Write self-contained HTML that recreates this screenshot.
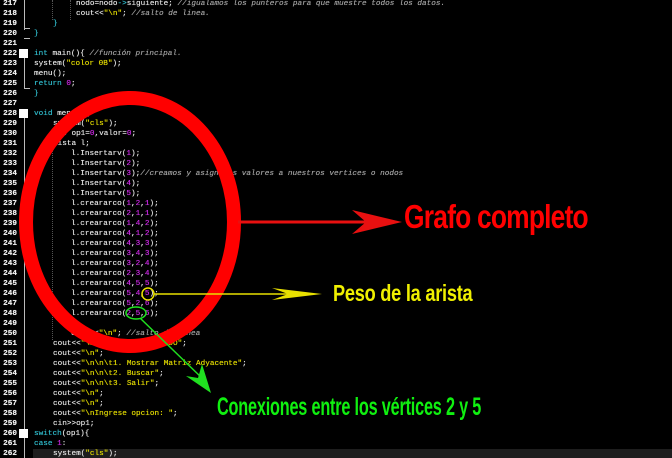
<!DOCTYPE html>
<html><head><meta charset="utf-8"><style>
html,body{margin:0;padding:0;background:#000;width:672px;height:458px;overflow:hidden;position:relative}
.l{position:absolute;left:0;height:10px;line-height:10px;font-family:"Liberation Mono",monospace;font-size:7.7px;color:#e0e0e0;white-space:pre;width:672px;text-shadow:0 0 0.4px currentColor}
.n{position:absolute;left:0;width:17px;text-align:right;color:#f0f0f0;font-weight:bold}
.c{position:absolute;left:34px}
.k{color:#2fb8c8}.s{color:#e0d800}.d{color:#c828e0}.m{color:#a0a0a0;font-style:italic}.b{color:#2fb8c8}
.hl{background:#1e1e1e}
.gut{position:absolute;left:24px;width:1px;background:#bbb}
.sq{position:absolute;left:19px;width:9px;height:9px;background:#fff}
.dot{position:absolute;width:0;border-left:1px dotted #555}
.ann{position:absolute;font-family:'Liberation Sans',sans-serif;font-weight:bold;white-space:nowrap;transform-origin:0 0}
</style></head><body>
<div class="gut" style="top:0;height:30px"></div>
<div class="gut" style="top:28px;width:6px;height:1px"></div>
<div class="gut" style="top:38px;width:6px;height:1px"></div>
<div class="gut" style="top:58px;height:30px"></div>
<div class="gut" style="top:88px;width:6px;height:1px"></div>
<div class="gut" style="top:118px;height:340px"></div>
<div class="dot" style="left:52px;top:0;height:20px"></div>
<div class="dot" style="left:70px;top:0;height:20px"></div>
<div class="dot" style="left:52px;top:150px;height:190px"></div>
<div class="sq" style="top:49px"></div>
<div class="sq" style="top:109px"></div>
<div class="sq" style="top:429px"></div>
<div class="l" style="top:-1px"><span class="n">217</span><span class="c" style="left:76px">nodo=nodo<span class="k">-&gt;</span>siguiente; <span class="m">//igualamos los punteros para que muestre todos los datos.</span></span></div>
<div class="l" style="top:9px"><span class="n">218</span><span class="c" style="left:76px">cout&lt;&lt;<span class="s">"\n"</span>; <span class="m">//salto de linea.</span></span></div>
<div class="l" style="top:19px"><span class="n">219</span><span class="c" style="left:53px"><span class="b">}</span></span></div>
<div class="l" style="top:29px"><span class="n">220</span><span class="c"><span class="b">}</span></span></div>
<div class="l" style="top:39px"><span class="n">221</span></div>
<div class="l" style="top:49px"><span class="n">222</span><span class="c"><span class="k">int</span> main(){ <span class="m">//función principal.</span></span></div>
<div class="l" style="top:59px"><span class="n">223</span><span class="c">system(<span class="s">"color 0B"</span>);</span></div>
<div class="l" style="top:69px"><span class="n">224</span><span class="c">menu();</span></div>
<div class="l" style="top:79px"><span class="n">225</span><span class="c"><span class="k">return</span> <span class="d">0</span>;</span></div>
<div class="l" style="top:89px"><span class="n">226</span><span class="c"><span class="b">}</span></span></div>
<div class="l" style="top:99px"><span class="n">227</span></div>
<div class="l" style="top:109px"><span class="n">228</span><span class="c"><span class="k">void</span> menu(){</span></div>
<div class="l" style="top:119px"><span class="n">229</span><span class="c" style="left:53px">system(<span class="s">"cls"</span>);</span></div>
<div class="l" style="top:129px"><span class="n">230</span><span class="c" style="left:53px"><span class="k">int</span> op1=<span class="d">0</span>,valor=<span class="d">0</span>;</span></div>
<div class="l" style="top:139px"><span class="n">231</span><span class="c" style="left:53px">lista l;</span></div>
<div class="l" style="top:149px"><span class="n">232</span><span class="c" style="left:71px">l.Insertarv(<span class="d">1</span>);</span></div>
<div class="l" style="top:159px"><span class="n">233</span><span class="c" style="left:71px">l.Insertarv(<span class="d">2</span>);</span></div>
<div class="l" style="top:169px"><span class="n">234</span><span class="c" style="left:71px">l.Insertarv(<span class="d">3</span>);<span class="m">//creamos y asignamos valores a nuestros vertices o nodos</span></span></div>
<div class="l" style="top:179px"><span class="n">235</span><span class="c" style="left:71px">l.Insertarv(<span class="d">4</span>);</span></div>
<div class="l" style="top:189px"><span class="n">236</span><span class="c" style="left:71px">l.Insertarv(<span class="d">5</span>);</span></div>
<div class="l" style="top:199px"><span class="n">237</span><span class="c" style="left:71px">l.creararco(<span class="d">1</span>,<span class="d">2</span>,<span class="d">1</span>);</span></div>
<div class="l" style="top:209px"><span class="n">238</span><span class="c" style="left:71px">l.creararco(<span class="d">2</span>,<span class="d">1</span>,<span class="d">1</span>);</span></div>
<div class="l" style="top:219px"><span class="n">239</span><span class="c" style="left:71px">l.creararco(<span class="d">1</span>,<span class="d">4</span>,<span class="d">2</span>);</span></div>
<div class="l" style="top:229px"><span class="n">240</span><span class="c" style="left:71px">l.creararco(<span class="d">4</span>,<span class="d">1</span>,<span class="d">2</span>);</span></div>
<div class="l" style="top:239px"><span class="n">241</span><span class="c" style="left:71px">l.creararco(<span class="d">4</span>,<span class="d">3</span>,<span class="d">3</span>);</span></div>
<div class="l" style="top:249px"><span class="n">242</span><span class="c" style="left:71px">l.creararco(<span class="d">3</span>,<span class="d">4</span>,<span class="d">3</span>);</span></div>
<div class="l" style="top:259px"><span class="n">243</span><span class="c" style="left:71px">l.creararco(<span class="d">3</span>,<span class="d">2</span>,<span class="d">4</span>);</span></div>
<div class="l" style="top:269px"><span class="n">244</span><span class="c" style="left:71px">l.creararco(<span class="d">2</span>,<span class="d">3</span>,<span class="d">4</span>);</span></div>
<div class="l" style="top:279px"><span class="n">245</span><span class="c" style="left:71px">l.creararco(<span class="d">4</span>,<span class="d">5</span>,<span class="d">5</span>);</span></div>
<div class="l" style="top:289px"><span class="n">246</span><span class="c" style="left:71px">l.creararco(<span class="d">5</span>,<span class="d">4</span>,<span class="d">5</span>);</span></div>
<div class="l" style="top:299px"><span class="n">247</span><span class="c" style="left:71px">l.creararco(<span class="d">5</span>,<span class="d">2</span>,<span class="d">6</span>);</span></div>
<div class="l" style="top:309px"><span class="n">248</span><span class="c" style="left:71px">l.creararco(<span class="d">2</span>,<span class="d">5</span>,<span class="d">6</span>);</span></div>
<div class="l" style="top:319px"><span class="n">249</span></div>
<div class="l" style="top:329px"><span class="n">250</span><span class="c" style="left:71px">cout&lt;&lt;<span class="s">"\n"</span>; <span class="m">//salto de linea</span></span></div>
<div class="l" style="top:339px"><span class="n">251</span><span class="c" style="left:53px">cout&lt;&lt;<span class="s">"\n\n\tGRAFO DIRIGIDO"</span>;</span></div>
<div class="l" style="top:349px"><span class="n">252</span><span class="c" style="left:53px">cout&lt;&lt;<span class="s">"\n"</span>;</span></div>
<div class="l" style="top:359px"><span class="n">253</span><span class="c" style="left:53px">cout&lt;&lt;<span class="s">"\n\n\t1. Mostrar Matriz Adyacente"</span>;</span></div>
<div class="l" style="top:369px"><span class="n">254</span><span class="c" style="left:53px">cout&lt;&lt;<span class="s">"\n\n\t2. Buscar"</span>;</span></div>
<div class="l" style="top:379px"><span class="n">255</span><span class="c" style="left:53px">cout&lt;&lt;<span class="s">"\n\n\t3. Salir"</span>;</span></div>
<div class="l" style="top:389px"><span class="n">256</span><span class="c" style="left:53px">cout&lt;&lt;<span class="s">"\n"</span>;</span></div>
<div class="l" style="top:399px"><span class="n">257</span><span class="c" style="left:53px">cout&lt;&lt;<span class="s">"\n"</span>;</span></div>
<div class="l" style="top:409px"><span class="n">258</span><span class="c" style="left:53px">cout&lt;&lt;<span class="s">"\nIngrese opcion: "</span>;</span></div>
<div class="l" style="top:419px"><span class="n">259</span><span class="c" style="left:53px">cin&gt;&gt;op1;</span></div>
<div class="l" style="top:429px"><span class="n">260</span><span class="c"><span class="k">switch</span>(op1){</span></div>
<div class="l" style="top:439px"><span class="n">261</span><span class="c"><span class="k">case</span> <span class="d">1</span>:</span></div>
<div class="l" style="top:449px"><span class="n">262</span><span class="c hl" style="left:33px;width:639px;padding-left:20px">system(<span class="s">"cls"</span>);</span></div>

<svg width="672" height="458" style="position:absolute;left:0;top:0" xmlns="http://www.w3.org/2000/svg">
<ellipse cx="130" cy="222" rx="104" ry="124" fill="none" stroke="#f00" stroke-width="14"/>
<line x1="238" y1="222" x2="370" y2="222" stroke="#e81010" stroke-width="3"/>
<path d="M352 210 L402 222 L352 234 L366 222 Z" fill="#e81010"/>
<ellipse cx="148" cy="294" rx="6" ry="6" fill="none" stroke="#e8e000" stroke-width="1.5"/>
<line x1="154" y1="294" x2="300" y2="294" stroke="#e8e000" stroke-width="1.5"/>
<path d="M272 288 L322 294 L272 300 L288 294 Z" fill="#e8e000"/>
<ellipse cx="136" cy="313" rx="10" ry="6" fill="none" stroke="#20e020" stroke-width="1.5"/>
<line x1="140" y1="318" x2="204" y2="380" stroke="#20e020" stroke-width="1.5"/>
<path d="M186 376 L211 393 L202 364 L198 378 Z" fill="#20e020"/>
</svg>
<div class="ann" style="left:404px;top:198px;font-size:33px;color:#f00;transform:scaleX(0.80);letter-spacing:-1px">Grafo completo</div>
<div class="ann" style="left:333px;top:280px;font-size:23px;color:#f0f000;transform:scaleX(0.79);letter-spacing:-0.3px">Peso de la arista</div>
<div class="ann" style="left:217px;top:393px;font-size:25px;color:#10f010;transform:scaleX(0.65);letter-spacing:-0.3px">Conexiones entre los vértices 2 y 5</div>
</body></html>
